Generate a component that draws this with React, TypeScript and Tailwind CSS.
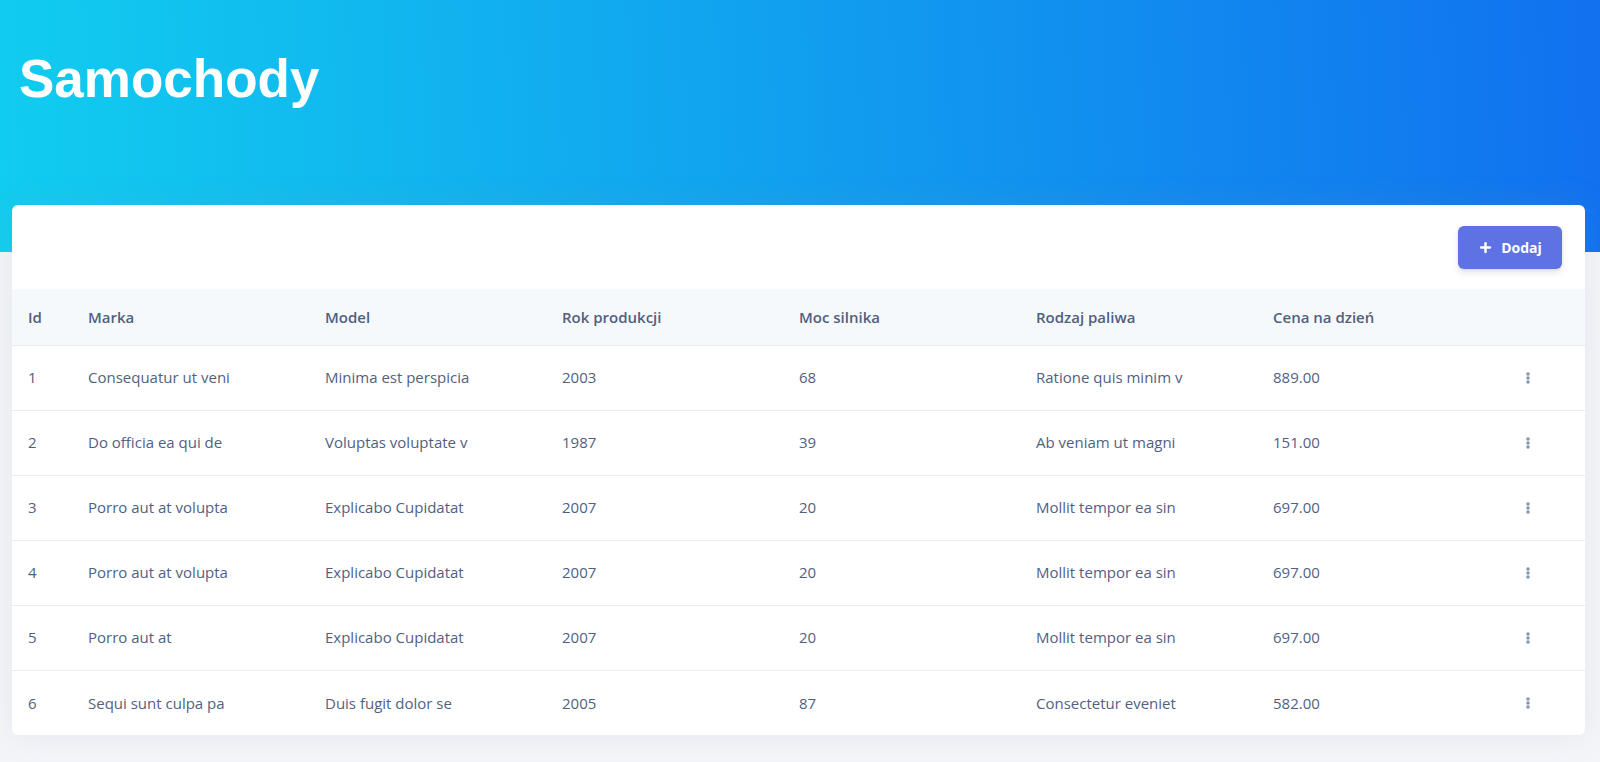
import { Plus } from 'lucide-react';

interface Car {
  id: number;
  brand: string;
  model: string;
  year: number;
  power: number;
  fuel: string;
  price: string;
}

const cars: Car[] = [
  { id: 1, brand: 'Consequatur ut veni', model: 'Minima est perspicia', year: 2003, power: 68, fuel: 'Ratione quis minim v', price: '889.00' },
  { id: 2, brand: 'Do officia ea qui de', model: 'Voluptas voluptate v', year: 1987, power: 39, fuel: 'Ab veniam ut magni', price: '151.00' },
  { id: 3, brand: 'Porro aut at volupta', model: 'Explicabo Cupidatat', year: 2007, power: 20, fuel: 'Mollit tempor ea sin', price: '697.00' },
  { id: 4, brand: 'Porro aut at volupta', model: 'Explicabo Cupidatat', year: 2007, power: 20, fuel: 'Mollit tempor ea sin', price: '697.00' },
  { id: 5, brand: 'Porro aut at', model: 'Explicabo Cupidatat', year: 2007, power: 20, fuel: 'Mollit tempor ea sin', price: '697.00' },
  { id: 6, brand: 'Sequi sunt culpa pa', model: 'Duis fugit dolor se', year: 2005, power: 87, fuel: 'Consectetur eveniet', price: '582.00' },
];

const columns = ['Id', 'Marka', 'Model', 'Rok produkcji', 'Moc silnika', 'Rodzaj paliwa', 'Cena na dzień'];

function DotsIcon() {
  return (
    <svg width="4" height="12" viewBox="0 0 4 12" fill="#8898aa">
      <circle cx="2" cy="2" r="1.8" />
      <circle cx="2" cy="6" r="1.8" />
      <circle cx="2" cy="10" r="1.8" />
    </svg>
  );
}

export default function App() {
  return (
    <div className="min-h-screen bg-[#f4f5f9] font-['Open_Sans',sans-serif]">
      {/* Header */}
      <div className="h-[252px] bg-[linear-gradient(87deg,#11cdef_0%,#1171ef_100%)] pl-[19px] pt-[52px]">
        <h1 className="font-['Liberation_Sans',Arial,sans-serif] text-[53px] font-bold leading-none text-white">
          Samochody
        </h1>
      </div>

      {/* Card */}
      <div className="relative -mt-[47px] ml-3 mr-[15px] overflow-hidden rounded-md bg-white shadow-[0_0_2rem_0_rgba(136,152,170,0.15)]">
        <div className="flex justify-end pt-[21px] pr-[23px] pb-5">
          <button className="flex h-[43px] w-[104px] items-center justify-center gap-2 rounded-md bg-[#5e72e4] text-[14px] font-bold text-white shadow-[0_4px_6px_rgba(50,50,93,0.11),0_1px_3px_rgba(0,0,0,0.08)]">
            <Plus size={15} strokeWidth={4} />
            Dodaj
          </button>
        </div>

        <table className="w-full table-fixed border-collapse text-left text-[15px] text-[#525f7f]">
          <colgroup>
            <col className="w-[60px]" />
            <col className="w-[237px]" />
            <col className="w-[237px]" />
            <col className="w-[237px]" />
            <col className="w-[237px]" />
            <col className="w-[237px]" />
            <col className="w-[237px]" />
            <col />
          </colgroup>
          <thead>
            <tr className="h-[56px] bg-[#f6f9fc]">
              {columns.map((c) => (
                <th key={c} className="pl-4 font-semibold">
                  {c}
                </th>
              ))}
              <th />
            </tr>
          </thead>
          <tbody>
            {cars.map((car) => (
              <tr key={car.id} className="h-[65px] border-t border-[#e9ecef]">
                <td className="pl-4">{car.id}</td>
                <td className="pl-4">{car.brand}</td>
                <td className="pl-4">{car.model}</td>
                <td className="pl-4">{car.year}</td>
                <td className="pl-4">{car.power}</td>
                <td className="pl-4">{car.fuel}</td>
                <td className="pl-4">{car.price}</td>
                <td className="pl-4">
                  <button className="flex h-8 w-9 items-center justify-center">
                    <DotsIcon />
                  </button>
                </td>
              </tr>
            ))}
          </tbody>
        </table>
      </div>
    </div>
  );
}
